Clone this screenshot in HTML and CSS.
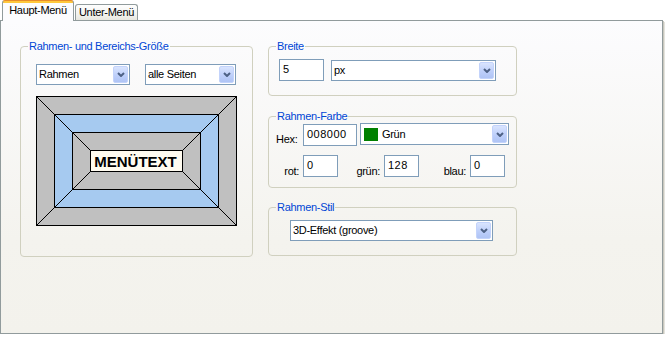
FILE: index.html
```html
<!DOCTYPE html>
<html lang="de">
<head>
<meta charset="utf-8">
<title>Menü-Einstellungen</title>
<link rel="stylesheet" href="styles.css">
</head>
<body>
<div class="tabs">
  <div class="tab tab-active">Haupt-Menü</div>
  <div class="tab">Unter-Menü</div>
</div>
<div class="panel">
  <fieldset class="group g-size">
    <legend>Rahmen- und Bereichs-Größe</legend>
    <div class="size-body">
      <div class="row">
        <div class="select w-rahmen"><span class="val">Rahmen</span><span class="btn"><svg width="8" height="5" viewBox="0 0 8 5"><path d="M1 1L4 4L7 1" fill="none" stroke="#4d6185" stroke-width="2"/></svg></span></div>
        <div class="select w-seiten"><span class="val">alle Seiten</span><span class="btn"><svg width="8" height="5" viewBox="0 0 8 5"><path d="M1 1L4 4L7 1" fill="none" stroke="#4d6185" stroke-width="2"/></svg></span></div>
      </div>
      <svg class="diagram" width="201" height="130" viewBox="0 0 201 130" shape-rendering="crispEdges">
        <rect x="0.5" y="0.5" width="200" height="129" fill="#c0c0c0" stroke="#000"/>
        <rect x="18.5" y="18.5" width="164" height="93" fill="#a6caf0" stroke="#000"/>
        <rect x="36.5" y="36.5" width="128" height="57" fill="#c0c0c0" stroke="#000"/>
        <path d="M0.5 0.5L54.5 54.5M200.5 0.5L146.5 54.5M0.5 129.5L54.5 75.5M200.5 129.5L146.5 75.5" stroke="#000" fill="none"/>
        <rect x="54.5" y="54.5" width="92" height="21" fill="#fffbf0" stroke="#000"/>
        <text x="99.5" y="71" text-anchor="middle" class="diagram-text" shape-rendering="auto">MENÜTEXT</text>
      </svg>
    </div>
  </fieldset>
  <div class="right">
    <fieldset class="group g-breite">
      <legend>Breite</legend>
      <div class="breite-body">
        <div class="field w-breite">5</div>
        <div class="select w-px"><span class="val">px</span><span class="btn"><svg width="8" height="5" viewBox="0 0 8 5"><path d="M1 1L4 4L7 1" fill="none" stroke="#4d6185" stroke-width="2"/></svg></span></div>
      </div>
    </fieldset>
    <fieldset class="group g-farbe">
      <legend>Rahmen-Farbe</legend>
      <div class="farbe-body">
        <div class="farbe-row1">
          <span class="lbl lbl-hex">Hex:</span>
          <div class="field w-hex">008000</div>
          <div class="select w-gruen"><span class="swatch"></span><span class="val">Grün</span><span class="btn"><svg width="8" height="5" viewBox="0 0 8 5"><path d="M1 1L4 4L7 1" fill="none" stroke="#4d6185" stroke-width="2"/></svg></span></div>
        </div>
        <div class="farbe-row2">
          <span class="lbl lbl-rot">rot:</span>
          <div class="field w-rgb">0</div>
          <span class="lbl lbl-gruen">grün:</span>
          <div class="field w-rgb">128</div>
          <span class="lbl lbl-blau">blau:</span>
          <div class="field w-rgb">0</div>
        </div>
      </div>
    </fieldset>
    <fieldset class="group g-stil">
      <legend>Rahmen-Stil</legend>
      <div class="stil-body">
        <div class="select w-stil"><span class="val">3D-Effekt (groove)</span><span class="btn"><svg width="8" height="5" viewBox="0 0 8 5"><path d="M1 1L4 4L7 1" fill="none" stroke="#4d6185" stroke-width="2"/></svg></span></div>
      </div>
    </fieldset>
  </div>
</div>
</body>
</html>
```
FILE: styles.css
```css
html, body {
  margin: 0;
  padding: 0;
  background: #ffffff;
}
body {
  font-family: "Liberation Sans", Arial, sans-serif;
  font-size: 11px;
  line-height: 13px;
  letter-spacing: -0.3px;
  color: #000;
}
* { box-sizing: border-box; }

.tabs {
  display: flex;
  align-items: flex-end;
  height: 20px;
  padding-left: 2px;
}
.tab {
  height: 16px;
  width: 63px;
  margin-left: 1px;
  padding-top: 1px;
  text-align: center;
  white-space: nowrap;
  border: 1px solid #919b9c;
  border-bottom: none;
  border-radius: 3px 3px 0 0;
  background: linear-gradient(#fefefe, #f3f3ef 60%, #e8e7e0);
}
.tab-active {
  width: 72px;
  height: 21px;
  margin-left: 0;
  margin-bottom: -1px;
  padding-top: 3px;
  z-index: 1;
  border-top-color: #e68b2c;
  background: linear-gradient(#ffc83c 0, #ffc83c 2px, #fcfcfe 2px);
}

.panel {
  display: flex;
  align-items: flex-start;
  gap: 15px;
  width: 663px;
  height: 314px;
  padding: 19px 0 0 19px;
  border: 1px solid #919b9c;
  background: linear-gradient(#fcfcfe, #f4f3ee 70%, #f3f2ec);
  box-shadow: 1px 1px 0 #c9c8bf, 2px 2px 0 #e4e3dc;
}

.group {
  margin: 0;
  padding: 0;
  min-width: 0;
  border: 1px solid #d0d0bf;
  border-radius: 4px;
}
.group legend {
  margin-left: 7px;
  padding: 0 1px;
  color: #0046d5;
  line-height: 13px;
}

.g-size {
  width: 233px;
  height: 217px;
}
.size-body {
  padding: 11px 0 0 15px;
}
.row {
  display: flex;
  gap: 15px;
}
.diagram {
  display: block;
  margin-top: 11px;
}
.diagram-text {
  font-family: "Liberation Sans", Arial, sans-serif;
  font-size: 15px;
  font-weight: bold;
  letter-spacing: 0;
  fill: #000;
}

.right {
  display: flex;
  flex-direction: column;
  gap: 14px;
}
.right .group {
  width: 249px;
}
.g-breite { height: 56px; }
.g-farbe { height: 78px; }
.g-stil { height: 55px; margin-top: -1px; }

.breite-body {
  display: flex;
  align-items: flex-end;
  gap: 7px;
  padding: 6px 0 0 10px;
}
.farbe-body {
  padding: 0 0 0 7px;
}
.farbe-row1 {
  display: flex;
  align-items: flex-start;
}
.farbe-row2 {
  display: flex;
  align-items: flex-end;
  margin-top: 9px;
}
.stil-body {
  padding: 6px 0 0 21px;
}

.select {
  display: flex;
  align-items: center;
  height: 21px;
  border: 1px solid #7f9db9;
  background: #fff;
}
.select .val {
  flex: 1;
  padding-left: 2px;
  white-space: nowrap;
  overflow: hidden;
}
.select .btn {
  display: flex;
  align-items: center;
  justify-content: center;
  align-self: stretch;
  width: 15px;
  margin: 1px;
  border: 1px solid #c3d3fb;
  border-radius: 2px;
  background: linear-gradient(#d9e4fe, #bccefa 60%, #afc4f5);
}
.select .btn svg { display: block; }
.swatch {
  width: 14px;
  height: 13px;
  margin-left: 3px;
  margin-right: 2px;
  background: #008000;
}
.w-rahmen { width: 94px; }
.w-seiten { width: 91px; }
.w-px { width: 165px; }
.w-gruen { width: 149px; height: 22px; margin-left: 3px; }
.w-stil { width: 203px; }

.field {
  height: 22px;
  padding: 3px 0 0 3px;
  border: 1px solid #7f9db9;
  background: #fff;
  letter-spacing: 0.5px;
  white-space: nowrap;
}
.w-breite { width: 45px; }
.w-hex { width: 54px; margin-top: 1px; }
.w-rgb { width: 35px; }

.lbl {
  white-space: nowrap;
}
.lbl-hex {
  width: 27px;
  padding-top: 10px;
}
.lbl-rot, .lbl-gruen, .lbl-blau {
  text-align: right;
  padding-right: 4px;
  margin-bottom: -1px;
}
.lbl-rot { width: 27px; }
.lbl-gruen { width: 46px; }
.lbl-blau { width: 51px; }
```
